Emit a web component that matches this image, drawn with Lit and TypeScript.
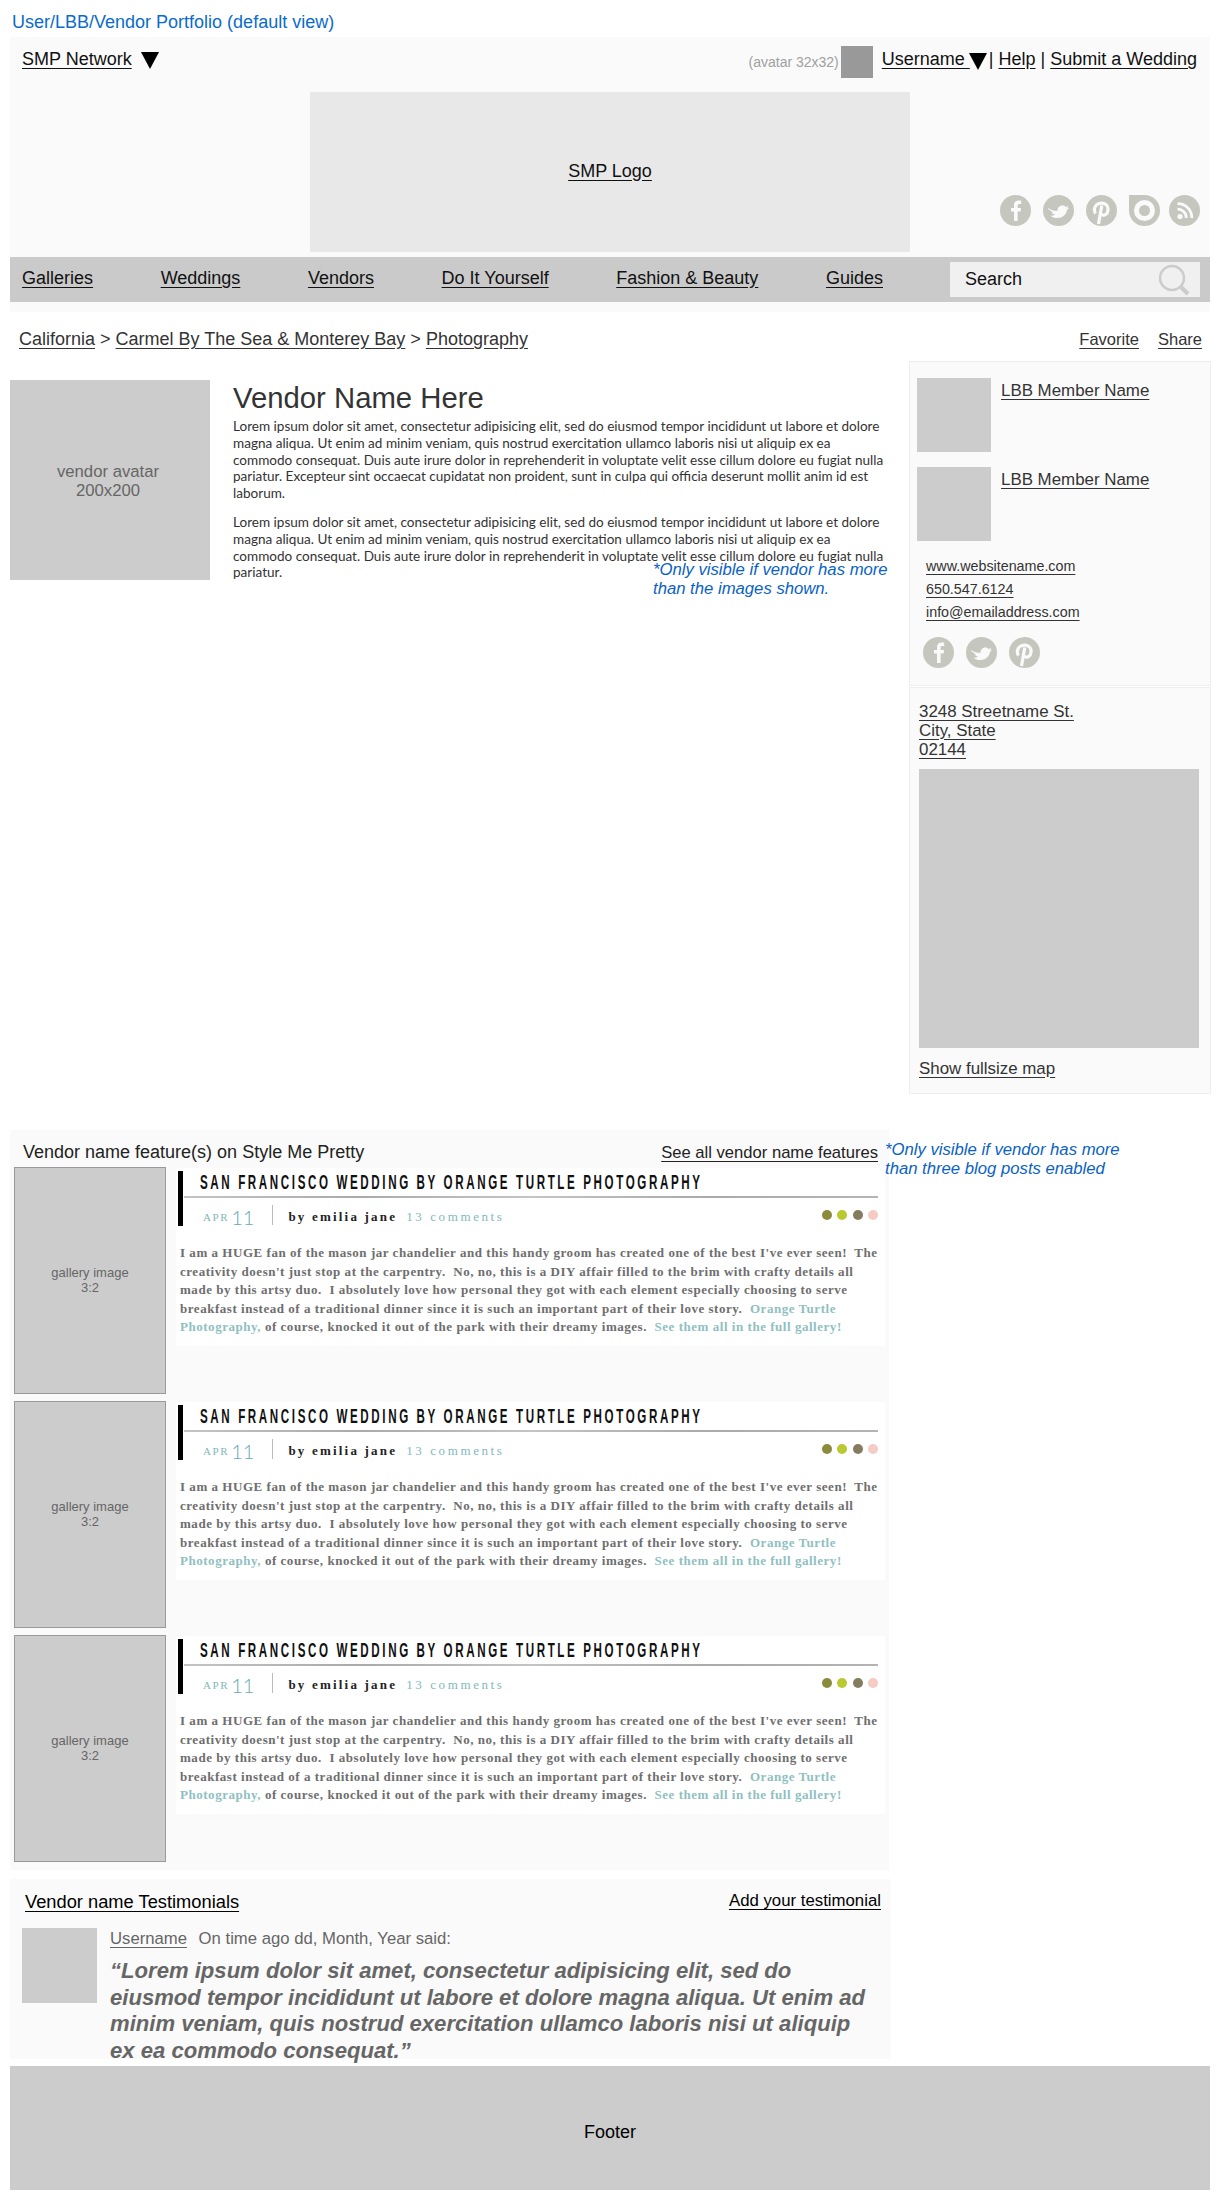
// app.ts - vendor portfolio wireframe
import { LitElement, html, css } from 'lit';
import { customElement } from 'lit/decorators.js';

const facebook = html`<svg class="icon" viewBox="0 0 31 31">
  <circle cx="15.5" cy="15.5" r="15.5" fill="#c5c6be" />
  <path
    fill="#fafafa"
    d="M17.6 26V16.6h3l.5-3.7h-3.5v-2.2c0-1.1.3-1.8 1.8-1.8h1.8V5.6c-.4 0-1.4-.1-2.7-.1-2.7 0-4.5 1.7-4.5 4.7v2.7h-3v3.7h3V26z"
  />
</svg>`;

const twitter = html`<svg class="icon" viewBox="0 0 31 31">
  <circle cx="15.5" cy="15.5" r="15.5" fill="#c5c6be" />
  <path
    fill="#fafafa"
    d="M5 13c3 2 6 2.8 9.500 3-.4-3 1.800-5.500 4.700-5.500 1.400 0 2.600.5 3.400 1.400 1-.2 2-.6 3-1-.4 1-1 1.800-2 2.400.8 0 1.700-.3 2.600-.6-.6 1-1.400 1.700-2.300 2.300-.5 4.500-4.500 8-9.500 8-2.800 0-5-.8-7-2.300 2.400 0 3.800-.5 4.800-1.300-2-.2-3-1-3.500-2 .5 0 1 0 1.500-.2-2-.6-3.500-2-3.500-3.300.5.3 1 .4 1.500.5C6 15.500 5 14.500 5 13z"
  />
</svg>`;

const pinterest = html`<svg class="icon" viewBox="0 0 31 31">
  <circle cx="15.5" cy="15.5" r="15.5" fill="#c5c6be" />
  <path
    fill="none"
    stroke="#fafafa"
    stroke-width="3.2"
    d="M9.500 18.500c-2-3-1.300-7 1.500-9 3-2.200 7.500-1.800 9.700.8 2.300 2.700 1.500 7.500-1 9.200-1.800 1.200-4 .7-4.700-1"
  />
  <path fill="none" stroke="#fafafa" stroke-width="3.2" d="M15.800 10.500L12.500 29" />
</svg>`;

const target = html`<svg class="icon" viewBox="0 0 31 31">
  <rect width="15.5" height="15.5" fill="#c5c6be" />
  <circle cx="15.5" cy="15.5" r="15.5" fill="#c5c6be" />
  <circle cx="15.5" cy="15.5" r="10.5" fill="#fafafa" />
  <circle cx="15.5" cy="15.5" r="5.5" fill="#c5c6be" />
</svg>`;

const rss = html`<svg class="icon" viewBox="0 0 31 31">
  <circle cx="15.5" cy="15.5" r="15.5" fill="#c5c6be" />
  <circle cx="11" cy="21.5" r="2.6" fill="#fafafa" />
  <path
    fill="none"
    stroke="#fafafa"
    stroke-width="2.7"
    d="M8.500 14.200a8.500 8.500 0 0 1 8.800 8.800M8.500 8.700a14 14 0 0 1 14.300 14.300"
  />
</svg>`;

const searchIcon = html`<svg class="search-icon" width="32" height="32" viewBox="0 0 32 32">
  <circle cx="14" cy="14" r="12" fill="none" stroke="#ccc" stroke-width="2.5" />
  <path d="M23 23l7 7" stroke="#ccc" stroke-width="4" />
</svg>`;

const lorem = html`Lorem ipsum dolor sit amet, consectetur adipisicing elit, sed do eiusmod tempor incididunt ut labore et dolore<br />
  magna aliqua. Ut enim ad minim veniam, quis nostrud exercitation ullamco laboris nisi ut aliquip ex ea<br />
  commodo consequat. Duis aute irure dolor in reprehenderit in voluptate velit esse cillum dolore eu fugiat nulla<br />`;

@customElement('app-root')
export class AppRoot extends LitElement {
  static override styles = css`
    :host {
      display: block;
      font-family: 'Liberation Sans', Arial, sans-serif;
      color: #111;
    }

    a {
      color: inherit;
      text-decoration: underline;
      text-underline-offset: 3px;
    }

    .page {
      width: 1200px;
      height: 2200px;
      margin-left: 10px;
      box-sizing: border-box;
    }

    .page-title {
      height: 37px;
      box-sizing: border-box;
      padding: 12px 0 0 2px;
      font-size: 18px;
      line-height: 20px;
      color: #0a6ccb;
    }

    .header {
      background: #fafafa;
      padding-bottom: 10px;
    }

    .top-row {
      height: 55px;
      box-sizing: border-box;
      padding: 9px 13px 0 12px;
      display: flex;
      justify-content: space-between;
      font-size: 18px;
      line-height: 26px;
    }

    .top-left,
    .top-right {
      display: flex;
      align-items: flex-start;
    }

    .arrow {
      width: 0;
      height: 0;
      border-left: 9px solid transparent;
      border-right: 9px solid transparent;
      border-top: 17px solid #000;
    }

    .top-left .arrow {
      margin: 6px 0 0 9px;
    }

    .top-right .arrow {
      margin: 7px 0 0 -1px;
    }

    .avatar-note {
      font-size: 14px;
      line-height: 32px;
      color: #a0a0a0;
      margin-right: 2px;
    }

    .avatar {
      width: 32px;
      height: 32px;
      background: #999;
      margin-right: 9px;
    }

    .sep {
      margin: 0 5px 0 2px;
    }

    .sep.wide {
      margin: 0 5px;
    }

    .logo-row {
      display: grid;
      grid-template-columns: 1fr 600px 1fr;
      height: 160px;
    }

    .logo {
      grid-column: 2;
      background: #e8e8e8;
      display: flex;
      align-items: center;
      justify-content: center;
      font-size: 18px;
      padding-bottom: 2px;
      box-sizing: border-box;
    }

    .logo-icons {
      display: flex;
      justify-content: flex-end;
      align-items: flex-end;
      gap: 12px;
      padding: 0 10px 26px 0;
    }

    .logo-icons .icon:nth-child(4) {
      margin-right: -3px;
    }

    .icon {
      width: 31px;
      height: 31px;
      display: block;
      flex: none;
    }

    .nav {
      height: 45px;
      margin-top: 5px;
      background: #cacaca;
      display: flex;
      align-items: center;
      justify-content: space-between;
      padding: 0 10px 0 12px;
      font-size: 18px;
    }

    .nav-links {
      display: flex;
      gap: 67.6px;
      margin-bottom: 3px;
      white-space: nowrap;
    }

    .search {
      width: 250px;
      height: 35px;
      box-sizing: border-box;
      flex: none;
      background: #f0f0f0;
      display: flex;
      align-items: center;
      justify-content: space-between;
      padding: 0 10px 0 15px;
    }

    .search-icon {
      flex: none;
    }

    .crumbs {
      height: 49px;
      box-sizing: border-box;
      padding: 16px 8px 0 9px;
      display: flex;
      justify-content: space-between;
      font-size: 18px;
      line-height: 22px;
      color: #333;
    }

    .crumb-actions {
      display: flex;
      gap: 19px;
      font-size: 16.5px;
    }

    .main {
      width: 1201px;
      height: 733px;
      display: flex;
      justify-content: space-between;
    }

    .vendor {
      position: relative;
      padding-top: 19px;
      display: flex;
      gap: 23px;
    }

    .vendor-avatar {
      width: 200px;
      height: 200px;
      background: #ccc;
      color: #666;
      font-size: 16.7px;
      line-height: 19px;
      display: flex;
      align-items: center;
      justify-content: center;
      text-align: center;
      padding: 1px 4px 0 0;
      box-sizing: border-box;
    }

    .vendor h1 {
      margin: 0;
      font-size: 29.3px;
      font-weight: 400;
      line-height: 36px;
      color: #333;
    }

    .vendor p {
      margin: 2px 0 0;
      font-family: Lato, 'Liberation Sans', sans-serif;
      font-size: 13.55px;
      line-height: 16.8px;
      color: #333;
      white-space: nowrap;
    }

    .vendor p + p {
      margin-top: 12px;
    }

    .note {
      font-style: italic;
      font-size: 16.7px;
      line-height: 19px;
      color: #0a62c4;
      white-space: nowrap;
    }

    .vendor .note {
      position: absolute;
      left: 643px;
      top: 199px;
    }

    .side {
      width: 302px;
      flex: none;
      color: #333;
    }

    .side-box {
      box-sizing: border-box;
      background: #fafafa;
      border: 1px solid #eee;
    }

    .members {
      height: 325px;
      padding: 16px 0 0 7px;
    }

    .member {
      display: flex;
      gap: 10px;
      margin-bottom: 15px;
      font-size: 16.9px;
      line-height: 20px;
    }

    .member a {
      margin-top: 3px;
    }

    .thumb {
      width: 74px;
      height: 74px;
      background: #ccc;
      flex: none;
    }

    .contacts {
      display: flex;
      flex-direction: column;
      align-items: flex-start;
      gap: 1px;
      margin: -1px 0 0 9px;
      font-size: 14.3px;
      line-height: 22px;
    }

    .side-icons {
      display: flex;
      gap: 12px;
      margin: 14px 0 0 6px;
    }

    .address {
      height: 407px;
      margin-top: 1px;
      padding: 14px 0 0 9px;
      font-size: 16.9px;
      line-height: 19px;
    }

    .map {
      width: 280px;
      height: 279px;
      background: #ccc;
      margin: 10px 0 11px;
    }

    .features {
      position: relative;
      width: 879px;
      height: 740px;
      background: #fafafa;
      margin-top: 36px;
    }

    .features > .note {
      position: absolute;
      left: 875px;
      top: 10px;
    }

    .section-head {
      height: 37px;
      box-sizing: border-box;
      padding: 11px 11px 0 13px;
      display: flex;
      justify-content: space-between;
      font-size: 18px;
      line-height: 22px;
      color: #222;
    }

    .section-head a {
      font-size: 16.6px;
      margin-top: 1px;
    }

    .posts {
      display: flex;
      flex-direction: column;
      gap: 7px;
      padding-left: 4px;
    }

    .post-row {
      display: flex;
      gap: 10px;
      align-items: flex-start;
    }

    .gallery {
      width: 152px;
      height: 227px;
      box-sizing: border-box;
      flex: none;
      background: #ccc;
      border: 1px solid #999;
      color: #666;
      font-size: 13px;
      line-height: 14.5px;
      display: flex;
      align-items: center;
      justify-content: center;
      text-align: center;
    }

    .post {
      width: 709px;
      height: 178px;
      margin-top: 1px;
      box-sizing: border-box;
      flex: none;
      background: #fff;
      padding: 3px 7px 0 2px;
    }

    .post-head {
      display: flex;
      align-items: flex-start;
    }

    .bar {
      width: 5px;
      height: 55px;
      background: #000;
      flex: none;
    }

    .post-head-body {
      flex: 1;
      min-width: 0;
      padding-left: 1px;
    }

    .post-title {
      height: 25px;
      padding-left: 16px;
      font-size: 20px;
      font-weight: 700;
      line-height: 23px;
      letter-spacing: 4.5px;
      color: #111;
      white-space: nowrap;
      transform: scaleX(0.58);
      transform-origin: 16px 0;
    }

    .post-rule {
      height: 2px;
      background: linear-gradient(90deg, #c4c4c4, #aaa 25%, #c4c4c4 50%, #aaa 75%, #b4b4b4);
    }

    .post-meta {
      height: 36px;
      padding-top: 2px;
      box-sizing: border-box;
      display: flex;
      align-items: center;
      font-family: 'Liberation Serif', serif;
      color: #7fb9bd;
      white-space: nowrap;
    }

    .month {
      margin-left: 19px;
      font-size: 11px;
      letter-spacing: 1.6px;
    }

    .day {
      margin-left: 2px;
      font-family: Lato, sans-serif;
      font-weight: 300;
      font-size: 20px;
      letter-spacing: 0;
      color: #68aab3;
    }

    .meta-sep {
      width: 1px;
      height: 20px;
      margin: -4px 15px 0 18px;
      background: #bbb;
    }

    .by {
      font-size: 13px;
      font-weight: 700;
      letter-spacing: 2.2px;
      color: #222;
    }

    .comments {
      margin-left: 9px;
      font-size: 13px;
      letter-spacing: 2.6px;
    }

    .dots {
      margin: -5px 0 0 auto;
      display: flex;
      gap: 5.5px;
    }

    .dot {
      width: 10px;
      height: 10px;
      border-radius: 50%;
    }

    .post-text {
      margin: 10px 0 0 2px;
      font-family: 'Liberation Serif', serif;
      font-size: 13px;
      font-weight: 700;
      line-height: 18.6px;
      letter-spacing: 0.53px;
      color: #6e6e6e;
      white-space: pre;
    }

    .post-text span {
      color: #8fbfc2;
    }

    .testimonials {
      width: 881px;
      height: 180px;
      background: #fafafa;
      margin-top: 9px;
      box-sizing: border-box;
      padding: 12px 10px 0 12px;
    }

    .test-head {
      display: flex;
      justify-content: space-between;
      padding-left: 3px;
      font-size: 18.3px;
      line-height: 22px;
      color: #000;
    }

    .test-head a + a {
      font-size: 16.8px;
      margin-top: -1px;
    }

    .test-body {
      display: flex;
      gap: 13px;
      margin-top: 15px;
    }

    .test-thumb {
      width: 75px;
      height: 75px;
      background: #ccc;
      flex: none;
    }

    .test-by {
      font-size: 16.7px;
      line-height: 22px;
      color: #666;
    }

    .test-by a {
      margin-right: 7px;
    }

    .quote {
      margin-top: 8px;
      font-size: 22.1px;
      font-weight: 700;
      font-style: italic;
      line-height: 26.5px;
      color: #666;
      white-space: nowrap;
    }

    .footer {
      height: 124px;
      margin-top: 7px;
      background: #ccc;
      color: #000;
      font-size: 18px;
      display: flex;
      align-items: center;
      justify-content: center;
      padding-top: 8px;
      box-sizing: border-box;
    }
  `;

  private renderPost() {
    return html`
      <div class="post-row">
        <div class="gallery">gallery image<br />3:2</div>
        <div class="post">
          <div class="post-head">
            <div class="bar"></div>
            <div class="post-head-body">
              <div class="post-title">SAN FRANCISCO WEDDING BY ORANGE TURTLE PHOTOGRAPHY</div>
              <div class="post-rule"></div>
              <div class="post-meta">
                <span class="month">APR</span>
                <span class="day">11</span>
                <span class="meta-sep"></span>
                <span class="by">by emilia jane</span>
                <span class="comments">13 comments</span>
                <span class="dots">
                  <span class="dot" style="background:#8b8b3c"></span>
                  <span class="dot" style="background:#b9c92f"></span>
                  <span class="dot" style="background:#857b5e"></span>
                  <span class="dot" style="background:#f6cbc3"></span>
                </span>
              </div>
            </div>
          </div>
          <div class="post-text">I am a HUGE fan of the mason jar chandelier and this handy groom has created one of the best I've ever seen!  The
creativity doesn't just stop at the carpentry.  No, no, this is a DIY affair filled to the brim with crafty details all
made by this artsy duo.  I absolutely love how personal they got with each element especially choosing to serve
breakfast instead of a traditional dinner since it is such an important part of their love story.  <span>Orange Turtle</span>
<span>Photography,</span> of course, knocked it out of the park with their dreamy images.  <span>See them all in the full gallery!</span></div>
        </div>
      </div>
    `;
  }

  override render() {
    return html`
      <div class="page">
        <div class="page-title">User/LBB/Vendor Portfolio (default view)</div>

        <div class="header">
          <div class="top-row">
            <div class="top-left">
              <a href="#">SMP Network</a>
              <span class="arrow"></span>
            </div>
            <div class="top-right">
              <span class="avatar-note">(avatar 32x32)</span>
              <span class="avatar"></span>
              <a href="#">Username&nbsp;</a>
              <span class="arrow"></span>
              <span class="sep">|</span>
              <a href="#">Help</a>
              <span class="sep wide">|</span>
              <a href="#">Submit a Wedding</a>
            </div>
          </div>
          <div class="logo-row">
            <div class="logo"><a href="#">SMP Logo</a></div>
            <div class="logo-icons">${facebook}${twitter}${pinterest}${target}${rss}</div>
          </div>
          <nav class="nav">
            <div class="nav-links">
              <a href="#">Galleries</a>
              <a href="#">Weddings</a>
              <a href="#">Vendors</a>
              <a href="#">Do It Yourself</a>
              <a href="#">Fashion &amp; Beauty</a>
              <a href="#">Guides</a>
            </div>
            <div class="search"><span>Search</span>${searchIcon}</div>
          </nav>
        </div>

        <div class="crumbs">
          <div>
            <a href="#">California</a> &gt; <a href="#">Carmel By The Sea &amp; Monterey Bay</a> &gt;
            <a href="#">Photography</a>
          </div>
          <div class="crumb-actions">
            <a href="#">Favorite</a>
            <a href="#">Share</a>
          </div>
        </div>

        <div class="main">
          <div class="vendor">
            <div class="vendor-avatar">vendor avatar<br />200x200</div>
            <div>
              <h1>Vendor Name Here</h1>
              <p>
                ${lorem}pariatur. Excepteur sint occaecat cupidatat non proident, sunt in culpa qui officia deserunt mollit anim id est<br />
                laborum.
              </p>
              <p>${lorem}pariatur.</p>
            </div>
            <div class="note">*Only visible if vendor has more<br />than the images shown.</div>
          </div>

          <aside class="side">
            <div class="side-box members">
              <div class="member">
                <div class="thumb"></div>
                <a href="#">LBB Member Name</a>
              </div>
              <div class="member">
                <div class="thumb"></div>
                <a href="#">LBB Member Name</a>
              </div>
              <div class="contacts">
                <a href="#">www.websitename.com</a>
                <a href="#">650.547.6124</a>
                <a href="#">info@emailaddress.com</a>
              </div>
              <div class="side-icons">${facebook}${twitter}${pinterest}</div>
            </div>
            <div class="side-box address">
              <a href="#">3248 Streetname St.</a><br />
              <a href="#">City, State</a><br />
              <a href="#">02144</a>
              <div class="map"></div>
              <a href="#">Show fullsize map</a>
            </div>
          </aside>
        </div>

        <section class="features">
          <div class="section-head">
            <span>Vendor name feature(s) on Style Me Pretty</span>
            <a href="#">See all vendor name features</a>
          </div>
          <div class="posts">${this.renderPost()}${this.renderPost()}${this.renderPost()}</div>
          <div class="note">*Only visible if vendor has more<br />than three blog posts enabled</div>
        </section>

        <section class="testimonials">
          <div class="test-head">
            <a href="#">Vendor name Testimonials</a>
            <a href="#">Add your testimonial</a>
          </div>
          <div class="test-body">
            <div class="test-thumb"></div>
            <div>
              <div class="test-by"><a href="#">Username</a> On time ago dd, Month, Year said:</div>
              <div class="quote">
                “Lorem ipsum dolor sit amet, consectetur adipisicing elit, sed do<br />
                eiusmod tempor incididunt ut labore et dolore magna aliqua. Ut enim ad<br />
                minim veniam, quis nostrud exercitation ullamco laboris nisi ut aliquip<br />
                ex ea commodo consequat.”
              </div>
            </div>
          </div>
        </section>

        <footer class="footer">Footer</footer>
      </div>
    `;
  }
}

declare global {
  interface HTMLElementTagNameMap {
    'app-root': AppRoot;
  }
}
